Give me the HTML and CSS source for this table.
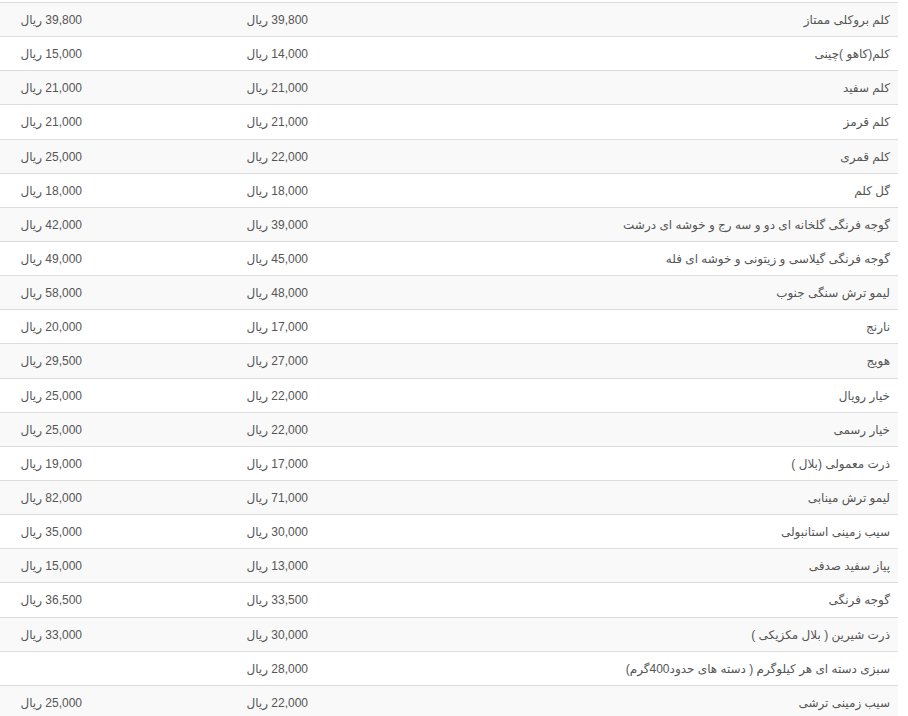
FILE: index.html
```html
<!DOCTYPE html>
<html lang="fa" dir="rtl">
<head>
<meta charset="utf-8">
<title>قیمت میوه و تره بار</title>
<link rel="stylesheet" href="styles.css">
</head>
<body>
<div class="wrap">
<table class="prices">
<colgroup><col class="c-name"><col class="c-min"><col class="c-max"></colgroup>
<tbody>
<tr><td>کلم بروکلی ممتاز</td><td>39,800 ریال</td><td>39,800 ریال</td></tr>
<tr><td>کلم(کاهو )چینی</td><td>14,000 ریال</td><td>15,000 ریال</td></tr>
<tr><td>کلم سفید</td><td>21,000 ریال</td><td>21,000 ریال</td></tr>
<tr><td>کلم قرمز</td><td>21,000 ریال</td><td>21,000 ریال</td></tr>
<tr><td>کلم قمری</td><td>22,000 ریال</td><td>25,000 ریال</td></tr>
<tr><td>گل کلم</td><td>18,000 ریال</td><td>18,000 ریال</td></tr>
<tr><td>گوجه فرنگی گلخانه ای دو و سه رج و خوشه ای درشت</td><td>39,000 ریال</td><td>42,000 ریال</td></tr>
<tr><td>گوجه فرنگی گیلاسی و زیتونی و خوشه ای فله</td><td>45,000 ریال</td><td>49,000 ریال</td></tr>
<tr><td>لیمو ترش سنگی جنوب</td><td>48,000 ریال</td><td>58,000 ریال</td></tr>
<tr><td>نارنج</td><td>17,000 ریال</td><td>20,000 ریال</td></tr>
<tr><td>هویج</td><td>27,000 ریال</td><td>29,500 ریال</td></tr>
<tr><td>خیار رویال</td><td>22,000 ریال</td><td>25,000 ریال</td></tr>
<tr><td>خیار رسمی</td><td>22,000 ریال</td><td>25,000 ریال</td></tr>
<tr><td>ذرت معمولی (بلال )</td><td>17,000 ریال</td><td>19,000 ریال</td></tr>
<tr><td>لیمو ترش مینابی</td><td>71,000 ریال</td><td>82,000 ریال</td></tr>
<tr><td>سیب زمینی استانبولی</td><td>30,000 ریال</td><td>35,000 ریال</td></tr>
<tr><td>پیاز سفید صدفی</td><td>13,000 ریال</td><td>15,000 ریال</td></tr>
<tr><td>گوجه فرنگی</td><td>33,500 ریال</td><td>36,500 ریال</td></tr>
<tr><td>ذرت شیرین ( بلال مکزیکی )</td><td>30,000 ریال</td><td>33,000 ریال</td></tr>
<tr><td>سبزی دسته ای هر کیلوگرم ( دسته های حدود400گرم)</td><td>28,000 ریال</td><td></td></tr>
<tr><td>سیب زمینی ترشی</td><td>22,000 ریال</td><td>25,000 ریال</td></tr>
</tbody>
</table>
</div>
</body>
</html>
```
FILE: styles.css
```css
html, body {
  margin: 0;
  padding: 0;
  background: #fff;
}
body {
  font-family: "Liberation Sans", "DejaVu Sans", Tahoma, sans-serif;
  font-size: 12px;
  line-height: 1.42857143;
  color: #555;
}
.wrap {
  padding-top: 2px;
  width: 898px;
  margin-right: 10px;
  margin-left: 0;
}
.prices {
  width: 898px;
  border-collapse: collapse;
  border-spacing: 0;
  table-layout: fixed;
}
.c-name { width: 582px; }
.c-min { width: 226px; }
.c-max { width: 90px; }
.prices td {
  padding: 9px 8px 7px;
  border-top: 1px solid #ddd;
  text-align: right;
  vertical-align: top;
  white-space: nowrap;
}
.prices tr:nth-child(odd) td {
  background: #f9f9f9;
}
```
